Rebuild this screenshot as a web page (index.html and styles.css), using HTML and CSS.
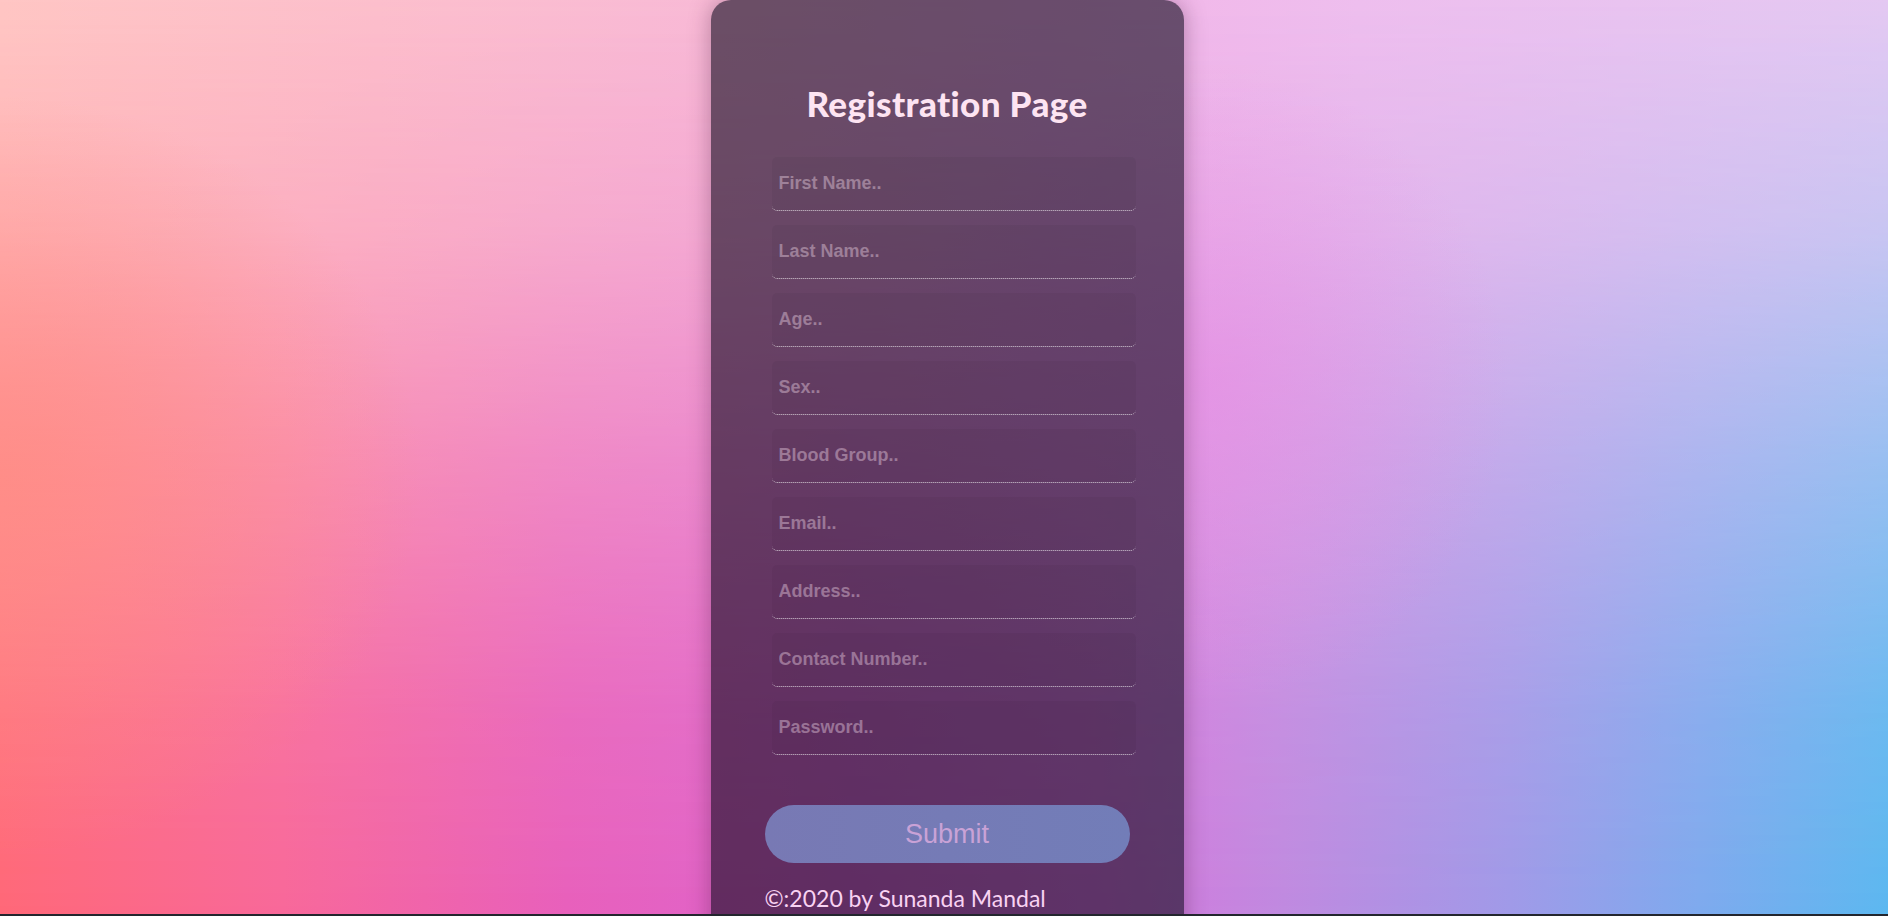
FILE: index.html
```html
<!DOCTYPE html>
<html lang="en">
<head>
<meta charset="utf-8">
<title>Registration Page</title>
<link rel="stylesheet" href="styles.css">
</head>
<body>
<div class="bg-top"></div>
<div class="bg-glow"></div>
<main class="card">
  <h1 class="title">Registration Page</h1>
  <form class="form">
    <div class="fields">
      <input class="field" type="text" placeholder="First Name..">
      <input class="field" type="text" placeholder="Last Name..">
      <input class="field" type="text" placeholder="Age..">
      <input class="field" type="text" placeholder="Sex..">
      <input class="field" type="text" placeholder="Blood Group..">
      <input class="field" type="text" placeholder="Email..">
      <input class="field" type="text" placeholder="Address..">
      <input class="field" type="text" placeholder="Contact Number..">
      <input class="field" type="password" placeholder="Password..">
    </div>
    <button class="submit" type="button">Submit</button>
  </form>
  <p class="footer">&copy;:2020 by Sunanda Mandal</p>
</main>
<div class="bottom-strip"></div>
</body>
</html>
```
FILE: styles.css
```css
html, body {
  margin: 0;
  padding: 0;
  height: 916px;
  overflow: hidden;
}

body {
  position: relative;
  background: linear-gradient(to right,
    #ff6878 0%,
    #f8689a 15%,
    #e860bc 30%,
    #dc66d0 45%,
    #d876dc 58%,
    #c08ae0 68%,
    #a09ae8 80%,
    #7eaaee 90%,
    #5cb8f0 100%);
}

.bg-top {
  position: absolute;
  inset: 0;
  background: linear-gradient(to right,
    #ffc6c4 0%,
    #fcbfcc 20%,
    #f8bad6 38%,
    #f4b4e6 55%,
    #eebeee 72%,
    #e4c8f2 100%);
  -webkit-mask-image: linear-gradient(to bottom, #000 0%, rgba(0,0,0,0.8) 25%, rgba(0,0,0,0.45) 50%, rgba(0,0,0,0.12) 78%, rgba(0,0,0,0) 100%);
  mask-image: linear-gradient(to bottom, #000 0%, rgba(0,0,0,0.8) 25%, rgba(0,0,0,0.45) 50%, rgba(0,0,0,0.12) 78%, rgba(0,0,0,0) 100%);
}

.bg-glow {
  position: absolute;
  inset: 0;
  background:
    radial-gradient(ellipse 420px 380px at 0% 52%, rgba(255, 140, 130, 0.75), rgba(255, 140, 130, 0) 100%),
    radial-gradient(ellipse 300px 320px at 64% 42%, rgba(232, 140, 228, 0.55), rgba(232, 140, 228, 0) 100%);
}

.card {
  position: relative;
  width: 473px;
  min-height: 960px;
  box-sizing: border-box;
  margin: 0 auto;
  padding: 82px 54px 0 54px;
  background: rgba(14, 6, 26, 0.6);
  border-radius: 20px 20px 0 0;
  box-shadow: 0 0 22px rgba(60, 20, 50, 0.35);
  left: 3px;
}

.title {
  margin: 0;
  font-family: "Comic Sans MS", "Lato", "DejaVu Sans", sans-serif;
  font-weight: 900;
  font-size: 35px;
  line-height: 42px;
  text-align: center;
  color: #fde4f2;
  letter-spacing: 0.4px;
}

.form {
  margin-top: 33px;
}

.fields {
  display: flex;
  flex-direction: column;
  gap: 14px;
  padding-left: 7px;
}

.field {
  box-sizing: border-box;
  width: 364px;
  height: 54px;
  margin: 0;
  padding: 0 7px;
  border: none;
  border-bottom: 1px dotted rgba(255, 255, 255, 0.75);
  border-radius: 5px;
  background: rgba(0, 0, 0, 0.04);
  font-family: "Liberation Sans", Arial, sans-serif;
  font-weight: 700;
  font-size: 18px;
  color: #fff;
  outline: none;
}

.field::placeholder {
  color: rgba(255, 230, 245, 0.38);
}

.submit {
  display: block;
  width: 365px;
  height: 58px;
  margin-top: 50px;
  border: none;
  border-radius: 29px;
  background: linear-gradient(to right, #7879b4, #727db8);
  font-family: "Liberation Sans", Arial, sans-serif;
  font-size: 27px;
  color: #c9a2d6;
  cursor: pointer;
}

.footer {
  margin: 21px 0 0 0;
  font-family: "Comic Sans MS", "Lato", "DejaVu Sans", sans-serif;
  font-size: 23px;
  line-height: 28px;
  color: #f8d2f2;
}

.bottom-strip {
  position: fixed;
  left: 0;
  right: 0;
  bottom: 0;
  height: 2px;
  background: #23262e;
}
```
